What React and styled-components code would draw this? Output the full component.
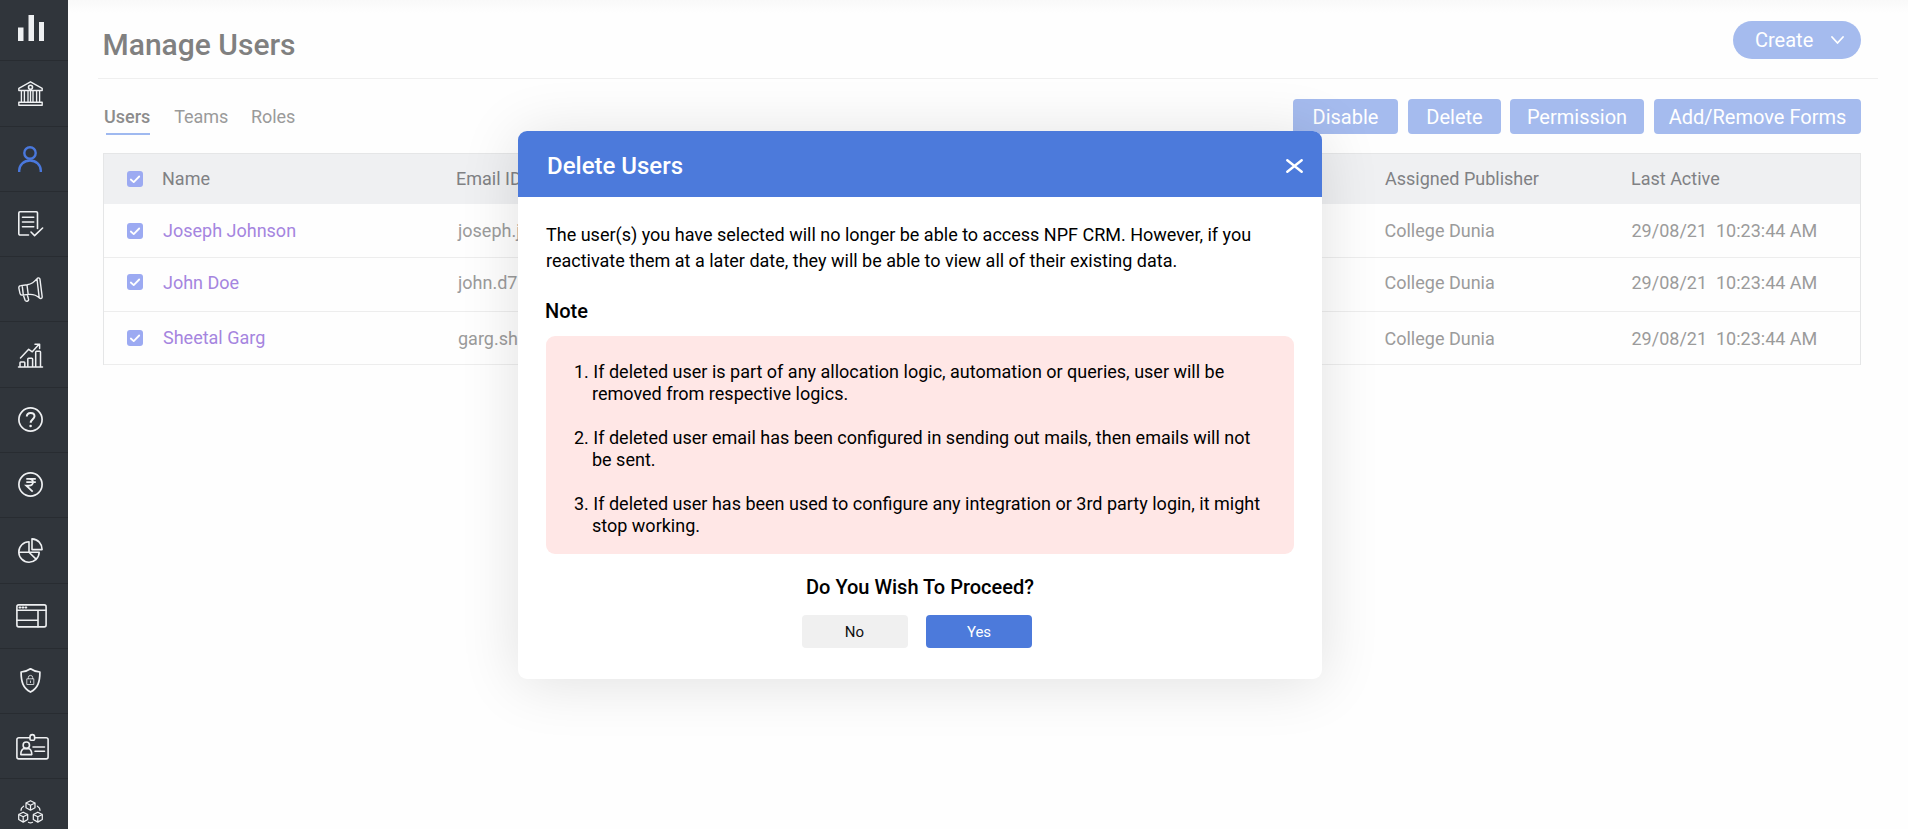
import React from "react";
import styled, { createGlobalStyle, css } from "styled-components";

const GlobalStyle = createGlobalStyle`
  *, *::before, *::after { box-sizing: border-box; }
  html, body { margin: 0; padding: 0; height: 100%; overflow: hidden; }
  body { font-family: Roboto, "Liberation Sans", sans-serif; background: #fefefe; }
  button { font: inherit; border: 0; margin: 0; padding: 0; }
  h1, h2, h3, p, ol { margin: 0; padding: 0; }
`;

const Page = styled.div`
  display: flex;
  position: relative;
  width: 100%;
  height: 100vh;
  overflow: hidden;
`;

const Sidebar = styled.nav`
  display: flex;
  flex-direction: column;
  flex: 0 0 68px;
  background: #30353b;
`;

const NavItem = styled.a`
  display: flex;
  justify-content: center;
  flex: 0 0 ${(p) => p.$height || 65}px;
  padding: ${(p) => p.$top}px ${(p) => 7 - 2 * (p.$shift || 0)}px 0 0;
  border-bottom: 1px solid #282c31;
  color: ${(p) => (p.$active ? "#4a78dc" : "#eef0f2")};

  svg {
    display: block;
    flex: none;
    overflow: visible;
    fill: none;
    stroke: currentColor;
    stroke-width: 1.6;
    stroke-linejoin: round;
    stroke-linecap: round;
  }
`;

const Main = styled.main`
  flex: 1;
  min-width: 0;
  padding: 0 30px;
  background: linear-gradient(#f9f9f9, #fefefe 13px);
`;

const Header = styled.header`
  display: flex;
  justify-content: space-between;
  height: 79px;
  padding: 21px 17px 0 5px;
  border-bottom: 1px solid #efefef;
`;

const Title = styled.h1`
  margin-left: -0.5px;
  font-size: 30px;
  font-weight: 500;
  line-height: 48px;
  color: #808080;
`;

const CreateButton = styled.button`
  display: flex;
  align-items: center;
  justify-content: space-between;
  width: 128px;
  height: 38px;
  padding: 0 17px 0 22px;
  border-radius: 19px;
  background: #a5bbee;
  color: #fff;
  font-size: 20px;
`;

const Toolbar = styled.div`
  display: flex;
  justify-content: space-between;
  padding: 20px 17px 0 6px;
  height: 74px;
`;

const Tabs = styled.div`
  display: flex;
  gap: 23px;
`;

const Tab = styled.a`
  height: 36px;
  font-size: 18px;
  line-height: 36px;
  letter-spacing: -0.1px;
  color: #9a9a9a;
  ${(p) =>
    p.$active &&
    css`
      margin-right: 1px;
      font-weight: 500;
      letter-spacing: 0;
      color: #8c8c8c;
      background: linear-gradient(#9fb9f0, #9fb9f0) 2px 100% / 45px 2px no-repeat;
    `}
`;

const Actions = styled.div`
  display: flex;
  height: 35px;
`;

const ActionButton = styled.button`
  width: ${(p) => p.$width}px;
  height: 35px;
  margin-left: ${(p) => p.$gap}px;
  border-radius: 4px;
  background: #a5bbee;
  color: #fff;
  font-size: 20px;
  line-height: 37px;
  white-space: nowrap;
`;

const Table = styled.section`
  margin: 0 17px 0 5px;
  border: 1px solid #e5e6e7;
  border-bottom: 0;
`;

const Row = styled.div`
  display: grid;
  grid-template-columns: 58px 294px 928.5px 246.5px 1fr;
  height: ${(p) => p.$height}px;
  padding-top: ${(p) => p.$top}px;
  border-bottom: 1px solid #ededed;
  font-size: 18px;
  line-height: 22px;
  color: #9b9b9b;
  white-space: pre;
`;

const HeadRow = styled(Row)`
  background: #eff0f2;
  border-bottom-color: #eff0f2;
  color: #808184;
`;

const Cell = styled.span`
  padding-left: ${(p) => p.$inset || 0}px;
  padding-top: ${(p) => p.$drop || 0}px;
`;

const NameLink = styled.a`
  padding-left: 1px;
  color: #a585df;
`;

const Checkbox = styled.span`
  display: flex;
  width: 16px;
  height: 16px;
  margin: ${(p) => p.$drop}px 0 0 23px;
  border-radius: 3px;
  background: #9caaf2;
`;

const Modal = styled.div`
  position: absolute;
  left: 518px;
  top: 131px;
  width: 804px;
  height: 548px;
  border-radius: 9px;
  background: #fff;
  box-shadow: 0 4px 60px rgba(0, 0, 0, 0.12);
  color: #000;
`;

const ModalHeader = styled.div`
  display: flex;
  justify-content: space-between;
  height: 66px;
  padding: 0 19px 0 29px;
  border-radius: 9px 9px 0 0;
  background: #4c7adb;
  color: #fff;
`;

const ModalTitle = styled.h2`
  font-size: 24px;
  font-weight: 500;
  line-height: 28px;
  margin-top: 21px;
`;

const CloseButton = styled.button`
  display: flex;
  align-items: center;
  height: 69px;
  background: none;
  color: #fff;
`;

const ModalBody = styled.div`
  padding: 25px 28px 0;
`;

const Lead = styled.p`
  font-size: 18px;
  line-height: 26px;
  white-space: nowrap;
`;

const NoteTitle = styled.h3`
  margin: 23px 0 0 -1px;
  font-size: 20px;
  font-weight: 500;
  line-height: 28px;
`;

const NoteBox = styled.ol`
  display: flex;
  flex-direction: column;
  gap: 22px;
  height: 218px;
  margin-top: 11px;
  padding: 25px 0 0 46px;
  border-radius: 9px;
  background: #ffe7e6;
  font-size: 18px;
  line-height: 22px;
  list-style: none;
`;

const NoteItem = styled.li`
  text-indent: -18px;
  white-space: nowrap;
`;

const Question = styled.h3`
  margin-top: 19px;
  font-size: 20px;
  font-weight: 500;
  line-height: 28px;
  text-align: center;
`;

const Choices = styled.div`
  display: flex;
  justify-content: center;
  gap: 18px;
  padding-right: 6px;
  margin-top: 14px;
`;

const Choice = styled.button`
  width: 106px;
  height: 33px;
  padding-right: ${(p) => (p.$primary ? 0 : 1)}px;
  border-radius: 4px;
  background: ${(p) => (p.$primary ? "#4c7adb" : "#f0f0f0")};
  color: ${(p) => (p.$primary ? "#fff" : "#111")};
  font-size: 15px;
  line-height: ${(p) => (p.$primary ? 34 : 32)}px;
`;

const navIcons = [
  {
    top: 15, height: 61,
    art: (
      <svg width="26" height="26" viewBox="0 0 26 26">
        <path fill="currentColor" stroke="none" d="M0 12.5h5.5V26H0zM10.5 0H16v26h-5.5zM21 7h5v19h-5z" />
      </svg>
    ),
  },
  {
    top: 20, height: 66,
    art: (
      <svg width="25" height="25" viewBox="0 0 25 25">
        <path d="M12.5.8 24.2 7.3v2.2H.8V7.3zM.8 24.2v-3h23.4v3zM3.4 10v11M6.4 10v11M10 10v11M12.5 10v11M15 10v11M18.6 10v11M21.6 10v11" strokeWidth="1.35" />
        <circle cx="12.5" cy="6.2" r="2" />
      </svg>
    ),
  },
  {
    top: 19, active: true, shift: -0.5,
    art: (
      <svg width="24" height="27" viewBox="0 0 24 27">
        <g strokeWidth="2.4" strokeLinecap="butt">
          <circle cx="12" cy="7" r="5.7" />
          <path d="M1.2 26v-1.4a10.8 10.1 0 0 1 21.6 0V26" />
        </g>
      </svg>
    ),
  },
  {
    top: 19,
    art: (
      <svg width="25" height="25" viewBox="0 0 25 25">
        <path d="M10.5 24H2a1.2 1.2 0 0 1-1.2-1.2V2A1.2 1.2 0 0 1 2 .8h16.300a1.200 1.200 0 0 1 1.200 1.200v15.500M4.500 6.200h11.200M4.500 11h11.200M4.500 15.800h11.200M13 21l3.600 3.600 8-7.600" />
      </svg>
    ),
  },
  {
    top: 20,
    art: (
      <svg width="25" height="25" viewBox="0 0 25 25">
        <path d="M.8 10.8c0-1.300.8-2.100 2-2.200l6.500-.8c4.200-.8 7.300-3 9.700-6.200.7-1 2.600-1 2.900.3l2.300 18c.1 1.600-1.700 2.200-2.700 1.100-2.800-2.700-6.400-4-11-3.600l-6.400.7c-1.200.1-1.900-.6-2.100-1.700zM19 2l2.200 18.600M9 8l1.200 9.400M4.200 8.600l1.100 9.300M5.300 18l1.800 5.200c.4 1 1.600 1.200 2.500.8.900-.3 1.200-1.200.9-2L9.300 17.700" strokeWidth="1.4" />
      </svg>
    ),
  },
  {
    top: 21, height: 66,
    art: (
      <svg width="25" height="25" viewBox="0 0 25 25">
        <path d="M.5 24h24M2 24v-4.300q0-.8.8-.8H6q.8 0 .8.800V24M9.800 24v-8q0-.8.800-.8h3.200q.8 0 .8.800v8M17.700 24V9q0-.8.800-.8h3.200q.8 0 .8.800v15M2.500 15l8.200-8.700 3.600 2.500L20.800 1.500M17 1.200h4.600v4.400" strokeWidth="1.5" />
      </svg>
    ),
  },
  {
    top: 19,
    art: (
      <svg width="25" height="25" viewBox="0 0 25 25">
        <circle cx="12.5" cy="12.5" r="11.6" strokeWidth="1.7" />
        <path d="M8.800 9.600c0-2.300 1.600-3.700 3.900-3.700s3.800 1.400 3.800 3.400c0 2.700-3.800 3.200-3.800 6.400" strokeWidth="2" strokeLinecap="butt" />
        <circle cx="12.6" cy="19" r="1.3" fill="currentColor" stroke="none" />
      </svg>
    ),
  },
  {
    top: 19,
    art: (
      <svg width="25" height="25" viewBox="0 0 25 25">
        <circle cx="12.5" cy="12.5" r="11.6" strokeWidth="1.7" />
        <path d="M8.300 6.800h9.500M8.300 10.200h9.500M8.300 6.800h2.800c5.200 0 5.200 6.800 0 6.800H8.300l6.400 6" strokeWidth="1.8" strokeLinecap="butt" strokeLinejoin="miter" />
      </svg>
    ),
  },
  {
    top: 20, height: 66,
    art: (
      <svg width="25" height="25" viewBox="0 0 25 25">
        <path d="M14 .9v10.700h10.100C24 5.600 20 1.300 14 .9zM11 3.800A10.200 10.200 0 1 0 21.200 14.200H11zM11 14.200.9 14M11 14.200l7.300 7.200" />
      </svg>
    ),
  },
  {
    top: 20, shift: 1,
    art: (
      <svg width="31" height="24" viewBox="0 0 31 24">
        <rect x=".9" y=".9" width="29.2" height="22" rx="1.8" />
        <path d="M1 6.200h29M22 6.200v16.600M1 16.200h21" />
        <path d="M3.500 3.600h.8M6.500 3.600h.8M9.500 3.600h.8" strokeWidth="2" />
      </svg>
    ),
  },
  {
    top: 19,
    art: (
      <svg width="21" height="25" viewBox="0 0 21 25">
        <path d="M10.500.8c2.600 1.900 5.700 2.900 9.400 3.200 0 9.600-1.800 16-9.400 20.100C2.900 20 1.100 13.600 1.100 4 4.800 3.700 7.900 2.700 10.500.8z" strokeWidth="1.7" />
        <path d="M7.200 10.800h6.600v5.700H7.200zM8.300 10.600V9.600a2.200 2.200 0 0 1 4.400 0v1M10.500 13v1.600" strokeWidth="1" opacity=".8" />
      </svg>
    ),
  },
  {
    top: 20, shift: 2,
    art: (
      <svg width="33" height="26" viewBox="0 0 33 26">
        <path d="M13.500 3.700H2.800A1.900 1.900 0 0 0 .9 5.600V23a1.900 1.900 0 0 0 1.900 1.900h27.400a1.900 1.900 0 0 0 1.900-1.900V5.600a1.900 1.900 0 0 0-1.900-1.900H19.500M17 13h11.500M19 17.300h9.500M14 2.900a2.300 2.300 0 0 1 4.600 0v2.300q0 1-1 1H15q-1 0-1-1z" />
        <circle cx="10.3" cy="11.2" r="3.2" />
        <path d="M4.800 20.600c0-4 2-5.600 3.500-6h4c1.500.4 3.500 2 3.500 6z" />
      </svg>
    ),
  },
  {
    top: 21,
    art: (
      <svg width="25" height="24" viewBox="0 0 25 24">
        <path d="M12.500.7 17 3v4.800l-4.500 2.400L8 7.800V3zM8 3l4.500 2.300L17 3M12.500 5.300v4.900M5.200 12.200l4.500 2.300v5l-4.500 2.600-4.500-2.600v-5zM.7 14.500l4.500 2.300 4.500-2.300M5.200 16.800v5.300M19.800 12.200l4.500 2.300v5l-4.500 2.600-4.500-2.600v-5zM15.300 14.500l4.500 2.300 4.500-2.300M19.800 16.800v5.300M5.600 6.200C4 7.200 3 8.600 3 10.300M19.400 6.200c1.600 1 2.600 2.400 2.600 4.100M10.500 22.300q2 1.200 4 0" strokeWidth="1.25" />
      </svg>
    ),
  },
];

const Check = ({ drop }) => (
  <Checkbox $drop={drop}>
    <svg width="16" height="16" viewBox="0 0 16 16" fill="none" stroke="#fff" strokeWidth="1.8" strokeLinecap="round" strokeLinejoin="round">
      <path d="m3.800 8.500 2.900 2.600 5.500-5.600" />
    </svg>
  </Checkbox>
);

const users = [
  { name: "Joseph Johnson", email: "joseph.j", height: 54, top: 16, check: 3, drop: 0 },
  { name: "John Doe", email: "john.d7", height: 54, top: 14, check: 2, drop: 0 },
  { name: "Sheetal Garg", email: "garg.sh", height: 53, top: 15, check: 3, drop: 1 },
];

const notes = [
  ["1. If deleted user is part of any allocation logic, automation or queries, user will be", "removed from respective logics."],
  ["2. If deleted user email has been configured in sending out mails, then emails will not", "be sent."],
  ["3. If deleted user has been used to configure any integration or 3rd party login, it might", "stop working."],
];

export default function App() {
  return (
    <>
      <GlobalStyle />
      <Page>
        <Sidebar>
          {navIcons.map((n, i) => (
            <NavItem key={i} $top={n.top} $height={n.height} $active={n.active} $shift={n.shift}>
              {n.art}
            </NavItem>
          ))}
        </Sidebar>
        <Main>
          <Header>
            <Title>Manage Users</Title>
            <CreateButton>
              Create
              <svg width="13" height="8" viewBox="0 0 13 8" fill="none" stroke="#fff" strokeWidth="1.8" strokeLinecap="round" strokeLinejoin="round">
                <path d="m1 1 5.500 6L12 1" />
              </svg>
            </CreateButton>
          </Header>
          <Toolbar>
            <Tabs>
              <Tab $active>Users</Tab>
              <Tab>Teams</Tab>
              <Tab>Roles</Tab>
            </Tabs>
            <Actions>
              <ActionButton $width={105} $gap={0}>Disable</ActionButton>
              <ActionButton $width={93} $gap={10}>Delete</ActionButton>
              <ActionButton $width={134} $gap={9}>Permission</ActionButton>
              <ActionButton $width={207} $gap={10}>Add/Remove Forms</ActionButton>
            </Actions>
          </Toolbar>
          <Table>
            <HeadRow $height={50} $top={14}>
              <Check drop={3} />
              <Cell>Name</Cell>
              <Cell>Email ID</Cell>
              <Cell $inset={0.5}>Assigned Publisher</Cell>
              <Cell>Last Active</Cell>
            </HeadRow>
            {users.map((u) => (
              <Row key={u.name} $height={u.height} $top={u.top}>
                <Check drop={u.check} />
                <NameLink>{u.name}</NameLink>
                <Cell $inset={2} $drop={u.drop}>{u.email}</Cell>
                <Cell $drop={u.drop}>College Dunia</Cell>
                <Cell $inset={0.5} $drop={u.drop}>{"29/08/21  10:23:44 AM"}</Cell>
              </Row>
            ))}
          </Table>
        </Main>
        <Modal role="dialog">
          <ModalHeader>
            <ModalTitle>Delete Users</ModalTitle>
            <CloseButton aria-label="Close">
              <svg width="17" height="14" viewBox="0 0 17 14" fill="none" stroke="#fff" strokeWidth="2.4" strokeLinecap="round">
                <path d="m1.300 1.200 14.400 11.600M15.700 1.200 1.300 12.800" />
              </svg>
            </CloseButton>
          </ModalHeader>
          <ModalBody>
            <Lead>
              The user(s) you have selected will no longer be able to access NPF CRM. However, if you
              <br />
              reactivate them at a later date, they will be able to view all of their existing data.
            </Lead>
            <NoteTitle>Note</NoteTitle>
            <NoteBox>
              {notes.map(([first, second]) => (
                <NoteItem key={first}>
                  {first}
                  <br />
                  {second}
                </NoteItem>
              ))}
            </NoteBox>
            <Question>Do You Wish To Proceed?</Question>
            <Choices>
              <Choice>No</Choice>
              <Choice $primary>Yes</Choice>
            </Choices>
          </ModalBody>
        </Modal>
      </Page>
    </>
  );
}
